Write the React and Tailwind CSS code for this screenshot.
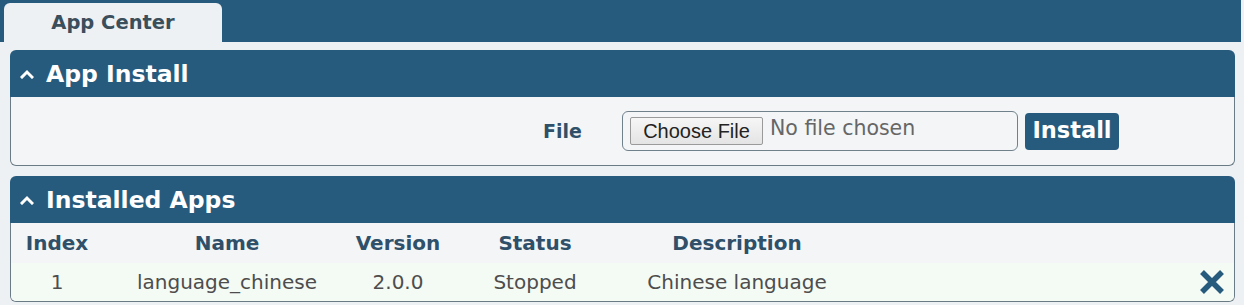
import React from 'react';

const font = { fontFamily: '"DejaVu Sans", Verdana, sans-serif' };

function Caret() {
    return (
        <svg width="14" height="10" viewBox="0 0 14 10" className="mr-[12px] mt-[1px]">
            <polyline points="2,8 7,3 12,8" fill="none" stroke="white" strokeWidth="3" strokeLinecap="square" />
        </svg>
    );
}

function PanelHeader({ title }) {
    return (
        <div className="flex items-center h-[47px] px-[10px] bg-[#265b7e] rounded-t-[6px] text-white font-bold text-[23.5px]">
            <Caret />
            <span className="mt-[2px]">{title}</span>
        </div>
    );
}

export default function App() {
    const cols = 'grid grid-cols-[92px_248px_94px_180px_224px_1fr] items-center';

    return (
        <div className="w-[1244px] h-[305px] bg-[#eef1f3] overflow-hidden" style={font}>
            {/* Top tab bar */}
            <div className="w-[1241px] h-[42px] bg-[#265b7e] pl-[4px] pt-[3px] flex">
                <div className="w-[218px] h-full bg-[#eef1f3] rounded-t-[6px] flex items-center justify-center text-[19.5px] font-bold text-[#3a4e5c]">
                    App Center
                </div>
            </div>

            <div className="pl-[10px] w-[1235px]">
                {/* App Install */}
                <div className="mt-[8px]">
                    <PanelHeader title="App Install" />
                    <div className="h-[69px] bg-[#f3f5f7] border border-t-0 border-[#6b7b86] rounded-b-[6px] flex items-center">
                        <div className="w-[571px] text-right text-[19px] font-bold text-[#2f5068]">File</div>
                        <div className="ml-[40px] w-[396px] h-[40px] border border-[#71818c] rounded-[6px] flex items-center pl-[7px]">
                            <div
                                className="h-[28px] w-[133px] bg-gradient-to-b from-[#f6f6f6] to-[#e4e4e4] border border-[#9a9a9a] rounded-[2px] flex items-center justify-center text-[20px] text-[#222]"
                                style={{ fontFamily: '"Liberation Sans", Arial, sans-serif' }}
                            >
                                Choose File
                            </div>
                            <span className="ml-[7px] text-[20.5px] text-[#666] -mt-[6px]">No file chosen</span>
                        </div>
                        <button className="ml-[7px] w-[94px] h-[37px] bg-[#265b7e] rounded-[4px] text-white font-bold text-[22.5px] flex items-center justify-center">
                            Install
                        </button>
                    </div>
                </div>

                {/* Installed Apps */}
                <div className="mt-[10px]">
                    <PanelHeader title="Installed Apps" />
                    <div className="bg-[#f3f5f7] border border-t-0 border-[#6b7b86] rounded-b-[6px] overflow-hidden">
                        <div className={`${cols} h-[40px] text-[20px] font-bold text-[#2f5068] text-center`}>
                            <div>Index</div>
                            <div>Name</div>
                            <div>Version</div>
                            <div>Status</div>
                            <div>Description</div>
                            <div />
                        </div>
                        <div className={`${cols} h-[38px] bg-[#f4faf4] text-[20px] text-[#4d4d4d] text-center`}>
                            <div>1</div>
                            <div>language_chinese</div>
                            <div>2.0.0</div>
                            <div>Stopped</div>
                            <div>Chinese language</div>
                            <div className="flex justify-end pr-[8px]">
                                <svg width="28" height="24" viewBox="0 0 28 24">
                                    <path d="M4 2 L24 22 M24 2 L4 22" stroke="#265b7e" strokeWidth="5.5" strokeLinecap="butt" />
                                </svg>
                            </div>
                        </div>
                    </div>
                </div>
            </div>
        </div>
    );
}
